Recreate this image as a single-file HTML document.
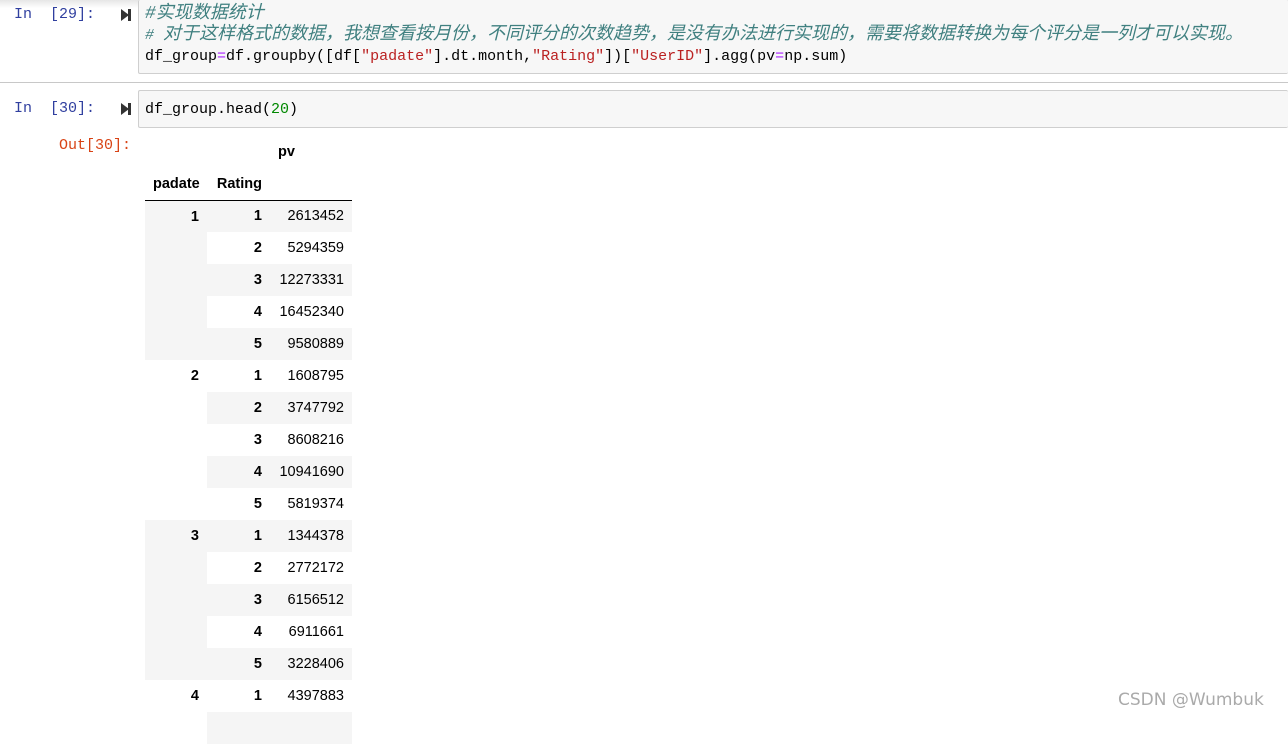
<!DOCTYPE html>
<html><head><meta charset="utf-8"><style>
body{margin:0;width:1288px;height:719px;background:#fff;position:relative;overflow:hidden;font-family:"Liberation Mono","Noto Sans CJK SC",monospace;}
.shadow{position:absolute;left:0;top:0;width:1288px;height:8px;background:linear-gradient(#e6e6e6,#fff);}
.prompt{position:absolute;font-size:15px;color:#303F9F;}
.out{color:#D84315;}
.run{position:absolute;width:0;height:0;border-top:6px solid transparent;border-bottom:6px solid transparent;border-left:8px solid #333;}
.run:after{content:"";position:absolute;left:-1px;top:-6px;width:3px;height:12px;background:#333;}
.box{position:absolute;left:138px;right:0;background:#f7f7f7;border:1px solid #cfcfcf;border-right:none;border-radius:2px;}
.code{position:absolute;left:145px;font-size:15px;line-height:21px;color:#000;white-space:pre;}
.cm{color:#408080;font-style:italic;}
.cj{font-size:18px;}
.s{color:#BA2121}.o{color:#AA22FF}.n{color:#080}
.sep{position:absolute;left:0;right:0;top:82px;height:1px;background:#c8c8c8;}
table{position:absolute;left:145px;top:136px;border-collapse:collapse;font-family:"Liberation Sans",Arial,sans-serif;font-size:14.5px;table-layout:fixed;width:207px;}
td,th{height:32px;padding:0 8px;text-align:right;vertical-align:middle;box-sizing:border-box;}
th{font-weight:bold;}
tbody tr:nth-child(odd){background:#f5f5f5;}
tbody th[rowspan]{vertical-align:top;padding-top:8px;height:24px;}
thead tr:last-child th{border-bottom:1px solid #000;}
.wm{position:absolute;left:1118px;top:690px;font-family:"DejaVu Sans",sans-serif;font-size:17px;color:#aaa;}
</style></head><body>
<div class="shadow"></div>
<div class="box" style="top:0;height:73px;border-top:none"></div>
<div class="prompt" style="left:14px;top:6px">In&nbsp;&nbsp;[29]:</div>
<div class="run" style="left:121px;top:9px"></div>
<div class="code" style="top:4px"><span class="cm"><span class="cj">#实现数据统计</span>
# <span class="cj">对于这样格式的数据，我想查看按月份，不同评分的次数趋势，是没有办法进行实现的，需要将数据转换为每个评分是一列才可以实现。</span></span>
df_group<span class="o">=</span>df.groupby([df[<span class="s">"padate"</span>].dt.month,<span class="s">"Rating"</span>])[<span class="s">"UserID"</span>].agg(pv<span class="o">=</span>np.sum)</div>
<div class="sep"></div>
<div class="box" style="top:90px;height:36px"></div>
<div class="prompt" style="left:14px;top:100px">In&nbsp;&nbsp;[30]:</div>
<div class="run" style="left:121px;top:103px"></div>
<div class="code" style="top:99px">df_group.head(<span class="n">20</span>)</div>
<div class="prompt out" style="left:59px;top:137px">Out[30]:</div>
<table>
<colgroup><col style="width:62px"><col style="width:63px"><col style="width:82px"></colgroup>
<thead>
<tr><th></th><th></th><th style="text-align:left;padding-left:8px">pv</th></tr>
<tr><th style="text-align:left">padate</th><th>Rating</th><th></th></tr>
</thead>
<tbody>
<tr><th rowspan="5">1</th><th>1</th><td>2613452</td></tr>
<tr><th>2</th><td>5294359</td></tr>
<tr><th>3</th><td>12273331</td></tr>
<tr><th>4</th><td>16452340</td></tr>
<tr><th>5</th><td>9580889</td></tr>
<tr><th rowspan="5">2</th><th>1</th><td>1608795</td></tr>
<tr><th>2</th><td>3747792</td></tr>
<tr><th>3</th><td>8608216</td></tr>
<tr><th>4</th><td>10941690</td></tr>
<tr><th>5</th><td>5819374</td></tr>
<tr><th rowspan="5">3</th><th>1</th><td>1344378</td></tr>
<tr><th>2</th><td>2772172</td></tr>
<tr><th>3</th><td>6156512</td></tr>
<tr><th>4</th><td>6911661</td></tr>
<tr><th>5</th><td>3228406</td></tr>
<tr><th rowspan="5">4</th><th>1</th><td>4397883</td></tr>
<tr><th></th><td></td></tr>
</tbody>
</table>
<div class="wm">CSDN @Wumbuk</div>
</body></html>
